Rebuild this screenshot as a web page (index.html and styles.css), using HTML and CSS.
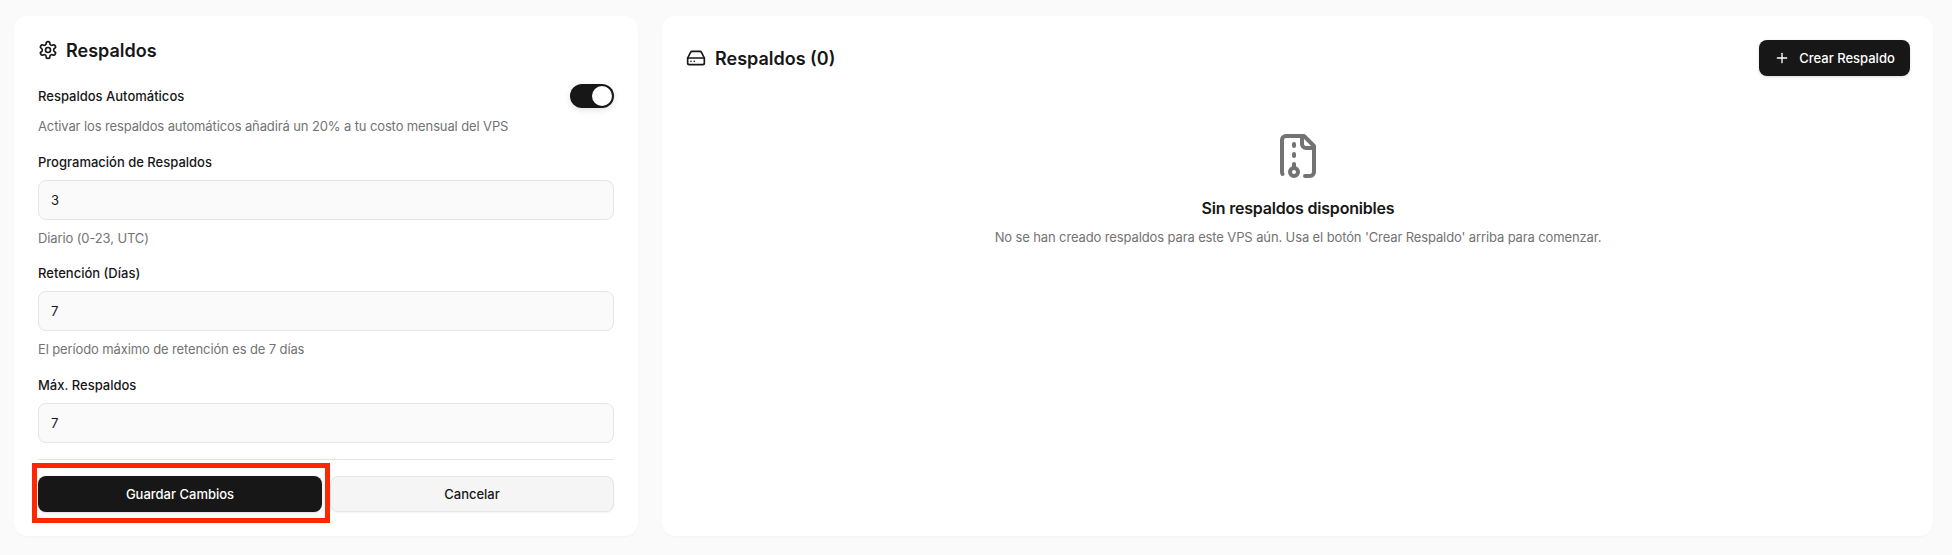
FILE: index.html
```html
<!DOCTYPE html>
<html lang="es">
<head>
    <meta charset="UTF-8">
    <meta name="viewport" content="width=device-width, initial-scale=1.0">
    <title>Respaldos</title>
    <link rel="stylesheet" href="styles.css">
</head>
<body>
    <div class="layout">
        <section class="card settings">
            <h2 class="settings-title">
                <svg class="icon-gear" viewBox="0 0 24 24" fill="none" stroke="currentColor" stroke-width="2" stroke-linecap="round" stroke-linejoin="round">
                    <path d="M12.22 2h-.44a2 2 0 0 0-2 2v.18a2 2 0 0 1-1 1.73l-.43.25a2 2 0 0 1-2 0l-.15-.08a2 2 0 0 0-2.73.73l-.22.38a2 2 0 0 0 .73 2.73l.15.1a2 2 0 0 1 1 1.72v.51a2 2 0 0 1-1 1.74l-.15.09a2 2 0 0 0-.73 2.73l.22.38a2 2 0 0 0 2.73.73l.15-.08a2 2 0 0 1 2 0l.43.25a2 2 0 0 1 1 1.73V20a2 2 0 0 0 2 2h.44a2 2 0 0 0 2-2v-.18a2 2 0 0 1 1-1.73l.43-.25a2 2 0 0 1 2 0l.15.08a2 2 0 0 0 2.73-.73l.22-.39a2 2 0 0 0-.73-2.73l-.15-.08a2 2 0 0 1-1-1.74v-.5a2 2 0 0 1 1-1.74l.15-.09a2 2 0 0 0 .73-2.73l-.22-.38a2 2 0 0 0-2.73-.73l-.15.08a2 2 0 0 1-2 0l-.43-.25a2 2 0 0 1-1-1.73V4a2 2 0 0 0-2-2z"/>
                    <circle cx="12" cy="12" r="3"/>
                </svg>
                Respaldos
            </h2>
            <div class="toggle-row">
                <span class="label">Respaldos Automáticos</span>
                <span class="toggle"><span class="toggle-knob"></span></span>
            </div>
            <p class="help help-first">Activar los respaldos automáticos añadirá un 20% a tu costo mensual del VPS</p>
            <div class="form-group">
                <label class="label" for="schedule">Programación de Respaldos</label>
                <input class="field" type="text" id="schedule" value="3">
                <p class="help">Diario (0-23, UTC)</p>
            </div>
            <div class="form-group">
                <label class="label" for="retention">Retención (Días)</label>
                <input class="field" type="text" id="retention" value="7">
                <p class="help">El período máximo de retención es de 7 días</p>
            </div>
            <div class="form-group">
                <label class="label" for="maxBackups">Máx. Respaldos</label>
                <input class="field" type="text" id="maxBackups" value="7">
            </div>
            <div class="actions">
                <div class="save-wrap">
                    <button class="btn btn-dark btn-save" type="button">Guardar Cambios</button>
                    <span class="highlight"></span>
                </div>
                <button class="btn btn-light" type="button">Cancelar</button>
            </div>
        </section>

        <section class="card backups">
            <header class="backups-head">
                <h2 class="backups-title">
                    <svg class="icon-drive" viewBox="0 0 24 24" fill="none" stroke="currentColor" stroke-width="2" stroke-linecap="round" stroke-linejoin="round">
                        <line x1="22" x2="2" y1="12" y2="12"/>
                        <path d="M5.45 5.11 2 12v6a2 2 0 0 0 2 2h16a2 2 0 0 0 2-2v-6l-3.45-6.89A2 2 0 0 0 16.76 4H7.24a2 2 0 0 0-1.79 1.11z"/>
                        <line x1="6" x2="6.01" y1="16" y2="16"/>
                        <line x1="10" x2="10.01" y1="16" y2="16"/>
                    </svg>
                    Respaldos (0)
                </h2>
                <button class="btn btn-dark btn-create" type="button">
                    <svg class="icon-plus" viewBox="0 0 24 24" fill="none" stroke="currentColor" stroke-width="2" stroke-linecap="round" stroke-linejoin="round">
                        <path d="M5 12h14"/>
                        <path d="M12 5v14"/>
                    </svg>
                    Crear Respaldo
                </button>
            </header>
            <div class="empty">
                <svg class="icon-file" viewBox="0 0 24 24" fill="none" stroke="currentColor" stroke-width="2" stroke-linecap="round" stroke-linejoin="round">
                    <path d="M10 12v-1"/>
                    <path d="M10 18v-2"/>
                    <path d="M10 7V6"/>
                    <path d="M14 2v4a2 2 0 0 0 2 2h4"/>
                    <path d="M15.5 22H18a2 2 0 0 0 2-2V7l-5-5H6a2 2 0 0 0-2 2v16a2 2 0 0 0 .274 1"/>
                    <circle cx="10" cy="20" r="2"/>
                </svg>
                <h3 class="empty-title">Sin respaldos disponibles</h3>
                <p class="empty-text">No se han creado respaldos para este VPS aún. Usa el botón 'Crear Respaldo' arriba para comenzar.</p>
            </div>
        </section>
    </div>
</body>
</html>
```

FILE: styles.css
```css
* {
    box-sizing: border-box;
}
body {
    font-family: 'Inter', sans-serif;
    margin: 0;
    height: 555px;
    overflow: hidden;
    color: #171717;
    background-color: #fafafa;
}
h2, h3, p {
    margin: 0;
}
.layout {
    display: grid;
    grid-template-columns: 624px 1271px;
    gap: 24px;
    padding: 16px 0 0 14px;
}
.card {
    height: 520px;
    background: #fff;
    border-radius: 14px;
    box-shadow: 0 1px 2px rgba(0, 0, 0, 0.03);
}
.settings {
    padding: 24px 24px 0;
}
.settings-title {
    display: flex;
    align-items: center;
    gap: 8px;
    height: 20px;
    font-size: 18px;
    font-weight: 600;
}
.icon-gear {
    width: 20px;
    height: 20px;
}
.toggle-row {
    display: flex;
    align-items: center;
    justify-content: space-between;
    margin-top: 24px;
}
.label {
    display: block;
    font-size: 13px;
    line-height: 16px;
    font-weight: 500;
}
.toggle {
    display: flex;
    justify-content: flex-end;
    align-items: center;
    width: 44px;
    height: 24px;
    padding: 2px;
    background: #171717;
    border-radius: 12px;
    box-shadow: 0 2px 6px rgba(0, 0, 0, 0.12);
}
.toggle-knob {
    width: 20px;
    height: 20px;
    background: #fff;
    border-radius: 50%;
}
.help {
    margin-top: 10px;
    font-size: 13px;
    line-height: 16px;
    letter-spacing: -0.12px;
    color: #737373;
}
.form-group {
    margin-top: 19.5px;
}
.form-group .label {
    margin-bottom: 10px;
}
.field {
    display: block;
    width: 100%;
    height: 40px;
    padding: 0 12px;
    font-family: inherit;
    font-size: 13px;
    color: #171717;
    background: #fafafa;
    border: 1px solid #e5e5e5;
    border-radius: 8px;
}
.actions {
    display: grid;
    grid-template-columns: 1fr 1fr;
    gap: 8px;
    margin-top: 16px;
    padding-top: 16px;
    border-top: 1px solid #e5e5e5;
}
.btn {
    display: flex;
    align-items: center;
    justify-content: center;
    height: 36px;
    font-family: inherit;
    font-size: 13px;
    font-weight: 500;
    border-radius: 8px;
    border: none;
}
.btn-dark {
    color: #fff;
    background: #171717;
    box-shadow: 0 1px 3px rgba(0, 0, 0, 0.15);
}
.btn-light {
    color: #171717;
    background: #f5f5f5;
    border: 1px solid #e5e5e5;
    box-shadow: 0 1px 2px rgba(0, 0, 0, 0.05);
}
.save-wrap {
    position: relative;
}
.btn-save {
    width: 100%;
}
/* red annotation box drawn over the save button */
.highlight {
    position: absolute;
    top: -13px;
    left: -6px;
    width: 298px;
    height: 60px;
    border: 5px solid #ff2600;
}
.backups {
    padding: 24px 23px 0 24px;
}
.backups-head {
    display: flex;
    align-items: center;
    justify-content: space-between;
    height: 36px;
}
.backups-title {
    display: flex;
    align-items: center;
    gap: 9px;
    font-size: 18px;
    font-weight: 600;
}
.icon-drive {
    width: 20px;
    height: 20px;
}
.btn-create {
    gap: 9px;
    width: 151px;
}
.icon-plus {
    width: 16px;
    height: 16px;
}
.empty {
    display: flex;
    flex-direction: column;
    align-items: center;
    margin-top: 56px;
}
.icon-file {
    width: 48px;
    height: 48px;
    color: #737373;
}
.empty-title {
    margin-top: 16px;
    font-size: 16px;
    line-height: 24px;
    letter-spacing: -0.2px;
    font-weight: 600;
}
.empty-text {
    margin-top: 7px;
    font-size: 13px;
    line-height: 20px;
    letter-spacing: -0.12px;
    color: #737373;
}
```
